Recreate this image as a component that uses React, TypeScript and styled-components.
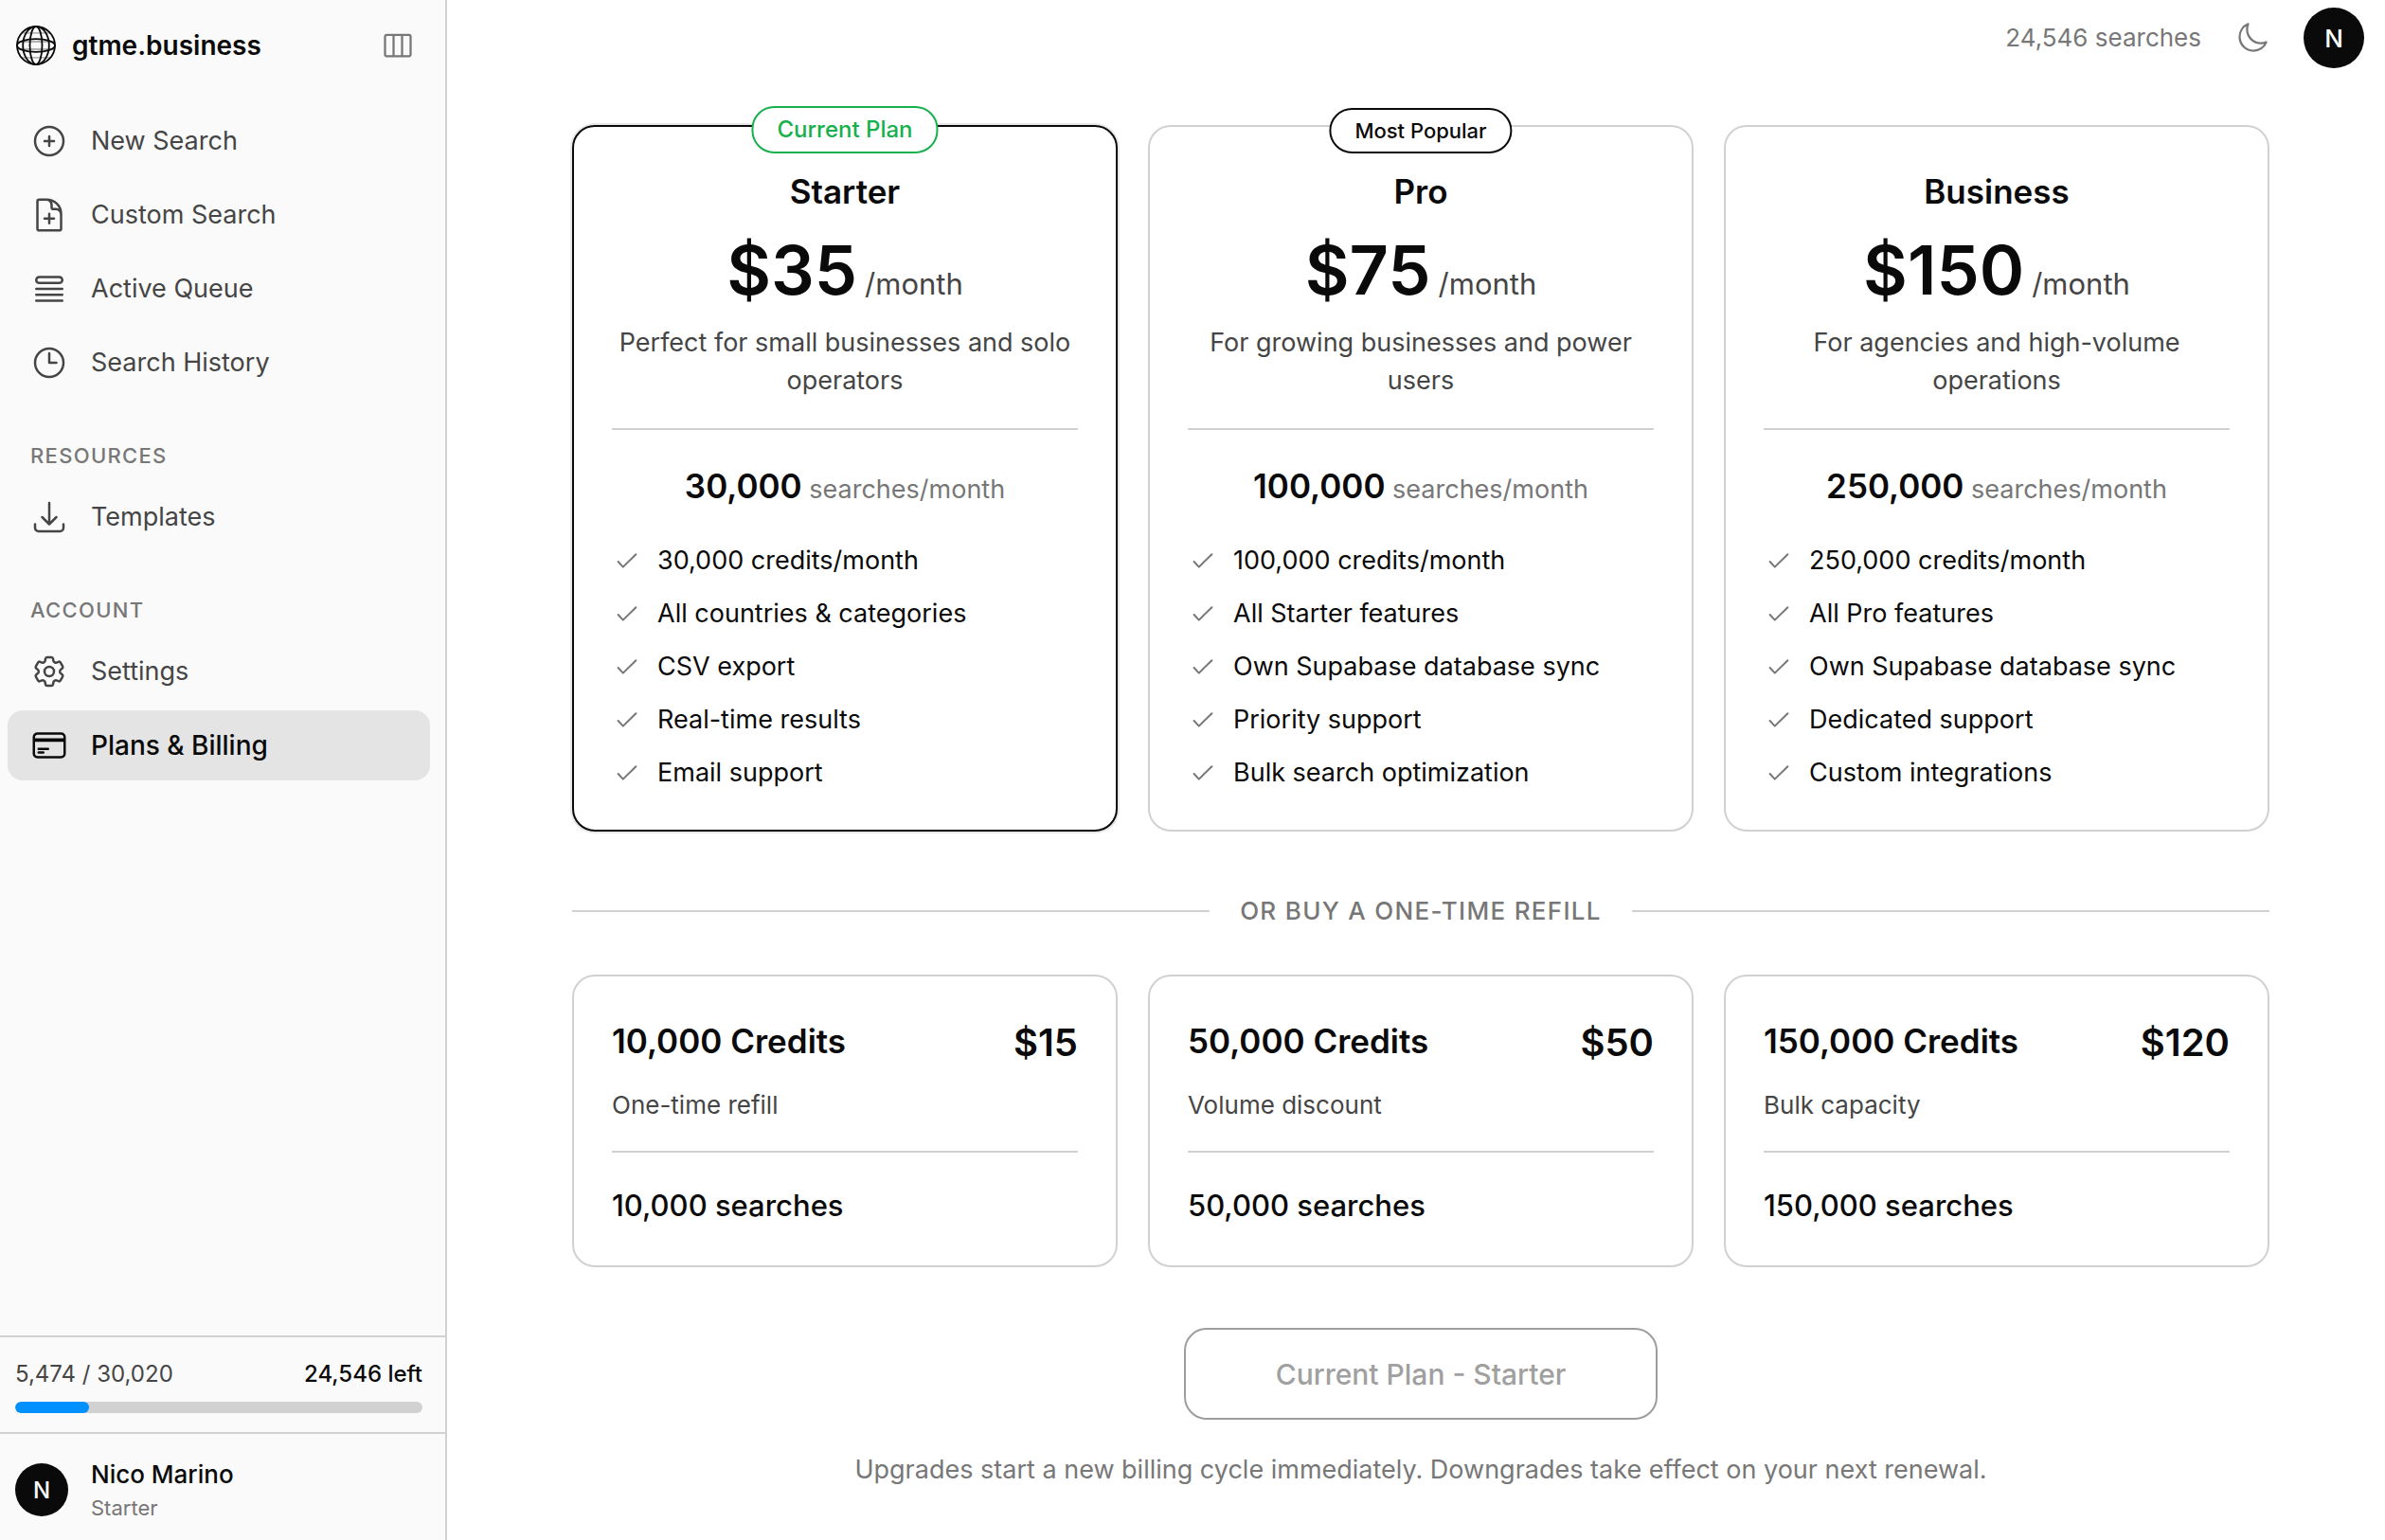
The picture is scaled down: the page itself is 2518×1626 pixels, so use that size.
import React from "react";
import styled, { createGlobalStyle, css } from "styled-components";
import {
  HiOutlinePlusCircle,
  HiOutlineDocumentPlus,
  HiOutlineQueueList,
  HiOutlineClock,
  HiOutlineArrowDownTray,
  HiOutlineCog6Tooth,
  HiOutlineCreditCard,
  HiOutlineViewColumns,
  HiOutlineMoon,
} from "react-icons/hi2";

const color = {
  ink: "#0a0a0a",
  body: "#454545",
  muted: "#777777",
  line: "#d1d1d1",
  panel: "#fafafa",
  active: "#e4e4e5",
  green: "#16b04c",
  blue: "#0090ff",
};

const GlobalStyle = createGlobalStyle`
  *, *::before, *::after { box-sizing: border-box; }
  html, body, #root { height: 100%; }
  body {
    margin: 0;
    background: #ffffff;
    color: ${color.ink};
    font-family: Inter, "Liberation Sans", sans-serif;
    font-size: 27px;
    -webkit-font-smoothing: antialiased;
  }
  h1, h2, h3, p, ul { margin: 0; padding: 0; }
  ul { list-style: none; }
  button { font-family: inherit; }
`;

const Shell = styled.div`
  display: flex;
  min-height: 100%;
`;

const Sidebar = styled.aside`
  display: flex;
  flex-direction: column;
  flex: 0 0 472px;
  background: ${color.panel};
  border-right: 2px solid ${color.line};
`;

const Brand = styled.div`
  display: flex;
  align-items: center;
  height: 96px;
  padding: 0 32px 0 16px;
  gap: 16px;
`;

const BrandLink = styled.a`
  display: flex;
  flex: 1;
  align-items: center;
  gap: 16px;
  color: ${color.ink};
  font-size: 28px;
  font-weight: 600;
  line-height: 40px;
  text-decoration: none;
`;

const IconButton = styled.button`
  display: grid;
  place-items: center;
  width: 36px;
  height: 36px;
  padding: 0;
  border: 0;
  background: none;
  color: ${color.muted};
  cursor: pointer;
`;

const Nav = styled.nav`
  display: flex;
  flex: 1;
  flex-direction: column;
  padding: 16px 16px 0 8px;
`;

const NavList = styled.ul`
  display: flex;
  flex-direction: column;
  gap: 4px;
`;

const NavHeading = styled.h2`
  padding: 45px 24px 12px;
  color: ${color.muted};
  font-size: 22px;
  font-weight: 500;
  line-height: 32px;
  letter-spacing: 0.06em;
  text-transform: uppercase;
`;

const NavLink = styled.a<{ $active?: boolean }>`
  display: flex;
  align-items: center;
  gap: 24px;
  height: 74px;
  padding: 0 24px;
  border-radius: 16px;
  color: ${color.body};
  font-size: 27px;
  line-height: 40px;
  text-decoration: none;

  ${({ $active }) =>
    $active &&
    css`
      background: ${color.active};
      color: ${color.ink};
      font-size: 28px;
      font-weight: 500;
    `}
`;

const Usage = styled.section`
  padding: 22px 24px 20px 16px;
  border-top: 2px solid ${color.line};
`;

const UsageRow = styled.div`
  display: flex;
  justify-content: space-between;
  margin-bottom: 12px;
  color: ${color.body};
  font-size: 24px;
  line-height: 34px;
`;

const UsageLeft = styled.span`
  color: ${color.ink};
  font-weight: 500;
`;

const Track = styled.div`
  height: 12px;
  overflow: hidden;
  border-radius: 6px;
  background: ${color.line};
`;

const Fill = styled.div`
  height: 100%;
  border-radius: 6px;
  background: ${color.blue};
`;

const Account = styled.section`
  display: flex;
  align-items: center;
  gap: 24px;
  padding: 24px 16px 18px;
  border-top: 2px solid ${color.line};
`;

const Avatar = styled.span<{ $size: number }>`
  display: grid;
  flex: none;
  place-items: center;
  width: ${({ $size }) => $size}px;
  height: ${({ $size }) => $size}px;
  border-radius: 50%;
  background: ${color.ink};
  color: #ffffff;
  font-size: ${({ $size }) => ($size > 60 ? 26 : 24)}px;
  font-weight: 500;
`;

const AvatarButton = styled.button`
  padding: 0;
  border: 0;
  border-radius: 50%;
  background: none;
  cursor: pointer;
`;

const AccountName = styled.p`
  font-size: 26px;
  font-weight: 500;
  line-height: 38px;
`;

const AccountPlan = styled.p`
  color: ${color.muted};
  font-size: 22px;
  line-height: 32px;
`;

const Main = styled.main`
  display: flex;
  flex: 1;
  flex-direction: column;
  min-width: 0;
`;

const TopBar = styled.header`
  display: flex;
  align-items: center;
  justify-content: flex-end;
  gap: 36px;
  padding: 8px 22px 8px 24px;
  color: ${color.muted};
  font-size: 26px;
  line-height: 40px;
`;

const Content = styled.div`
  padding: 52px 122px 40px 132px;
`;

const Page = styled.div`
  display: flex;
  flex-direction: column;
  max-width: 1792px;
  margin: 0 auto;
`;

const CardGrid = styled.div`
  display: grid;
  grid-template-columns: repeat(3, minmax(0, 1fr));
  gap: 32px;
`;

const Card = styled.article<{ $current?: boolean }>`
  position: relative;
  padding: 40px;
  border: 2px solid ${({ $current }) => ($current ? color.ink : color.line)};
  border-radius: 24px;
  background: #ffffff;
  box-shadow: ${({ $current }) => ($current ? "0 0 0 2px #e8e8e8" : "none")};
`;

const Badge = styled.span<{ $current?: boolean }>`
  position: absolute;
  top: ${({ $current }) => ($current ? -22 : -20)}px;
  left: 50%;
  padding: 6px 25px;
  border: 2px solid currentColor;
  border-radius: 24px;
  background: #ffffff;
  color: ${({ $current }) => ($current ? color.green : color.ink)};
  font-size: ${({ $current }) => ($current ? 24 : 22)}px;
  font-weight: 500;
  line-height: ${({ $current }) => ($current ? 34 : 32)}px;
  white-space: nowrap;
  transform: translateX(-50%);
`;

const PlanHead = styled.div`
  display: flex;
  flex-direction: column;
  align-items: center;
  padding-bottom: 30px;
  border-bottom: 2px solid ${color.line};
  text-align: center;
`;

const PlanName = styled.h2`
  font-size: 35px;
  font-weight: 600;
  line-height: 56px;
`;

const Price = styled.p`
  display: flex;
  align-items: baseline;
  gap: 8px;
  margin: 8px 0 10px;
  color: ${color.body};
  font-size: 31px;
  line-height: 40px;
`;

const Amount = styled.span`
  color: ${color.ink};
  font-size: 72px;
  font-weight: 600;
  line-height: 94px;
`;

const PlanText = styled.p`
  color: ${color.body};
  font-size: 27px;
  line-height: 40px;
`;

const Quota = styled.p`
  padding: 36px 0 28px;
  color: ${color.muted};
  font-size: 27px;
  line-height: 54px;
  text-align: center;
`;

const QuotaValue = styled.strong`
  color: ${color.ink};
  font-size: 35px;
  font-weight: 600;
  line-height: 40px;
`;

const Features = styled.ul`
  display: flex;
  flex-direction: column;
  gap: 16px;
`;

const Feature = styled.li`
  display: flex;
  align-items: center;
  gap: 16px;
  font-size: 27px;
  line-height: 40px;

  svg {
    flex: none;
    color: ${color.muted};
  }
`;

const Separator = styled.div`
  display: flex;
  align-items: center;
  gap: 32px;
  margin: 64px 0 47px;
  color: ${color.muted};
  font-size: 26px;
  font-weight: 500;
  line-height: 40px;
  letter-spacing: 0.05em;
  text-transform: uppercase;

  &::before,
  &::after {
    content: "";
    flex: 1;
    height: 2px;
    background: ${color.line};
  }
`;

const RefillHead = styled.div`
  display: flex;
  justify-content: space-between;
  margin-bottom: 16px;
`;

const RefillTitle = styled.h3`
  font-size: 35px;
  font-weight: 600;
  line-height: 56px;
`;

const RefillPrice = styled.span`
  font-size: 40px;
  font-weight: 600;
  line-height: 60px;
`;

const RefillText = styled.p`
  padding-bottom: 28px;
  border-bottom: 2px solid ${color.line};
  color: ${color.body};
  font-size: 26px;
  line-height: 40px;
`;

const RefillQuota = styled.p`
  padding-top: 33px;
  font-size: 31px;
  font-weight: 500;
  line-height: 46px;
`;

const PlanButton = styled.button`
  align-self: center;
  width: 500px;
  height: 97px;
  margin-top: 64px;
  border: 2px solid #9d9d9d;
  border-radius: 24px;
  background: #ffffff;
  color: #a0a0a0;
  font-size: 30px;
  font-weight: 500;
`;

const Note = styled.p`
  margin-top: 32px;
  color: ${color.muted};
  font-size: 27px;
  line-height: 42px;
  text-align: center;
`;

const Globe = () => (
  <svg width="44" height="44" viewBox="0 0 44 44" fill="none" stroke="currentColor" strokeWidth="1.8" aria-hidden="true">
    <path d="M7 8.8H37M3 18H41M3 26H41M7 34.8H37" stroke="#9a9a9a" strokeWidth="1.3" />
    <circle cx="22" cy="22" r="20" />
    <ellipse cx="22" cy="22" rx="13.8" ry="20" />
    <ellipse cx="22" cy="22" rx="6.5" ry="20" />
    <ellipse cx="22" cy="22" rx="20" ry="6.8" />
  </svg>
);

const Check = () => (
  <svg width="32" height="32" viewBox="0 0 32 32" fill="none" stroke="currentColor" strokeWidth="2" strokeLinecap="round" strokeLinejoin="round" aria-hidden="true">
    <path d="M6.6 17l5.2 5.6L25.4 9.2" />
  </svg>
);

type Item = { label: string; Icon: React.ComponentType<{ size?: number }>; active?: boolean };

const groups: { title?: string; items: Item[] }[] = [
  {
    items: [
      { label: "New Search", Icon: HiOutlinePlusCircle },
      { label: "Custom Search", Icon: HiOutlineDocumentPlus },
      { label: "Active Queue", Icon: HiOutlineQueueList },
      { label: "Search History", Icon: HiOutlineClock },
    ],
  },
  { title: "Resources", items: [{ label: "Templates", Icon: HiOutlineArrowDownTray }] },
  {
    title: "Account",
    items: [
      { label: "Settings", Icon: HiOutlineCog6Tooth },
      { label: "Plans & Billing", Icon: HiOutlineCreditCard, active: true },
    ],
  },
];

const plans = [
  {
    name: "Starter",
    price: "$35",
    text: "Perfect for small businesses and solo operators",
    quota: "30,000",
    badge: "Current Plan",
    current: true,
    features: ["30,000 credits/month", "All countries & categories", "CSV export", "Real-time results", "Email support"],
  },
  {
    name: "Pro",
    price: "$75",
    text: "For growing businesses and power users",
    quota: "100,000",
    badge: "Most Popular",
    features: ["100,000 credits/month", "All Starter features", "Own Supabase database sync", "Priority support", "Bulk search optimization"],
  },
  {
    name: "Business",
    price: "$150",
    text: "For agencies and high-volume operations",
    quota: "250,000",
    features: ["250,000 credits/month", "All Pro features", "Own Supabase database sync", "Dedicated support", "Custom integrations"],
  },
];

const refills = [
  { title: "10,000 Credits", price: "$15", text: "One-time refill", quota: "10,000 searches" },
  { title: "50,000 Credits", price: "$50", text: "Volume discount", quota: "50,000 searches" },
  { title: "150,000 Credits", price: "$120", text: "Bulk capacity", quota: "150,000 searches" },
];

const used = 5474;
const total = 30020;

export default function App() {
  return (
    <>
      <GlobalStyle />
      <Shell>
        <Sidebar>
          <Brand>
            <BrandLink href="#">
              <Globe />
              gtme.business
            </BrandLink>
            <IconButton type="button" aria-label="Toggle sidebar">
              <HiOutlineViewColumns size={36} />
            </IconButton>
          </Brand>
          <Nav>
            {groups.map(({ title, items }) => (
              <React.Fragment key={title ?? "main"}>
                {title && <NavHeading>{title}</NavHeading>}
                <NavList>
                  {items.map(({ label, Icon, active }) => (
                    <li key={label}>
                      <NavLink href="#" $active={active} aria-current={active ? "page" : undefined}>
                        <Icon size={40} />
                        {label}
                      </NavLink>
                    </li>
                  ))}
                </NavList>
              </React.Fragment>
            ))}
          </Nav>
          <Usage>
            <UsageRow>
              <span>5,474 / 30,020</span>
              <UsageLeft>24,546 left</UsageLeft>
            </UsageRow>
            <Track>
              <Fill style={{ width: `${(used / total) * 100}%` }} />
            </Track>
          </Usage>
          <Account>
            <Avatar $size={56}>N</Avatar>
            <div>
              <AccountName>Nico Marino</AccountName>
              <AccountPlan>Starter</AccountPlan>
            </div>
          </Account>
        </Sidebar>
        <Main>
          <TopBar>
            <span>24,546 searches</span>
            <IconButton type="button" aria-label="Dark mode">
              <HiOutlineMoon size={36} />
            </IconButton>
            <AvatarButton type="button" aria-label="Account menu">
              <Avatar $size={64}>N</Avatar>
            </AvatarButton>
          </TopBar>
          <Content>
            <Page>
              <CardGrid>
                {plans.map((plan) => (
                  <Card key={plan.name} $current={plan.current}>
                    {plan.badge && <Badge $current={plan.current}>{plan.badge}</Badge>}
                    <PlanHead>
                      <PlanName>{plan.name}</PlanName>
                      <Price>
                        <Amount>{plan.price}</Amount>
                        <span>/month</span>
                      </Price>
                      <PlanText>{plan.text}</PlanText>
                    </PlanHead>
                    <Quota>
                      <QuotaValue>{plan.quota}</QuotaValue> searches/month
                    </Quota>
                    <Features>
                      {plan.features.map((feature) => (
                        <Feature key={feature}>
                          <Check />
                          {feature}
                        </Feature>
                      ))}
                    </Features>
                  </Card>
                ))}
              </CardGrid>
              <Separator>Or buy a one-time refill</Separator>
              <CardGrid>
                {refills.map((refill) => (
                  <Card key={refill.title}>
                    <RefillHead>
                      <RefillTitle>{refill.title}</RefillTitle>
                      <RefillPrice>{refill.price}</RefillPrice>
                    </RefillHead>
                    <RefillText>{refill.text}</RefillText>
                    <RefillQuota>{refill.quota}</RefillQuota>
                  </Card>
                ))}
              </CardGrid>
              <PlanButton type="button" disabled>
                Current Plan - Starter
              </PlanButton>
              <Note>Upgrades start a new billing cycle immediately. Downgrades take effect on your next renewal.</Note>
            </Page>
          </Content>
        </Main>
      </Shell>
    </>
  );
}
